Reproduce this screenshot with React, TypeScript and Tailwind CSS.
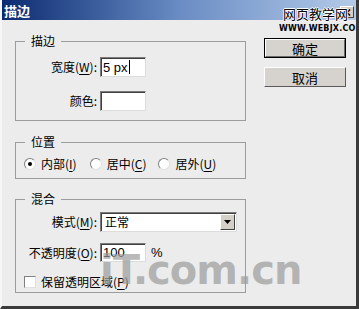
import React from 'react'

const cjk = { fontFamily: '"Noto Sans CJK SC", "Liberation Sans", sans-serif' }

function U({ children }: { children: React.ReactNode }) {
  return <span className="underline underline-offset-2">{children}</span>
}

function Sunken({ className, children }: { className: string; children?: React.ReactNode }) {
  return (
    <div
      className={`bg-white border border-t-[#7a7a7a] border-l-[#7a7a7a] border-r-[#dcdcdc] border-b-[#dcdcdc] shadow-[inset_1px_1px_0_#404040] ${className}`}
    >
      {children}
    </div>
  )
}

function Radio({ checked }: { checked?: boolean }) {
  return (
    <div className="w-[12px] h-[12px] rounded-full bg-white border border-t-[#808080] border-l-[#808080] border-r-[#e0e0e0] border-b-[#e0e0e0] flex items-center justify-center">
      {checked && <div className="w-[4px] h-[4px] rounded-full bg-black" />}
    </div>
  )
}

function Group({ title, className, children }: { title: string; className: string; children: React.ReactNode }) {
  return (
    <fieldset className={`border border-[#9c9c9c] ${className}`}>
      <legend className="ml-[9px] px-[6px] text-[12px] leading-[12px] text-black">{title}</legend>
      {children}
    </fieldset>
  )
}

export default function App() {
  return (
    <div
      className="w-[359px] h-[309px] bg-[#ececec] relative overflow-hidden border-l-2 border-l-[#f6f6f6] border-r-[3px] border-r-[#3a3a3a] border-b-[3px] border-b-[#3a3a3a] text-[12px] text-black"
      style={cjk}
    >
      {/* title bar */}
      <div className="h-[20px] bg-gradient-to-r from-[#0c2a70] via-[#6a8cc4] to-[#b4cbe8] flex items-center pl-[2px]">
        <span className="text-white font-bold text-[13px] leading-none">描边</span>
      </div>

      <div className="flex">
        <div className="ml-[13px] pt-[15px] w-[231px] flex flex-col">
          <Group title="描边" className="h-[86px]">
            <div className="pt-[10px] grid grid-cols-[81px_auto] gap-x-[3px] gap-y-[14px] items-center">
              <span className="text-right">宽度(<U>W</U>):</span>
              <Sunken className="w-[46px] h-[20px] flex items-center pl-[2px]">
                <span className="text-[13px] leading-none" style={{ fontFamily: '"Liberation Sans", sans-serif' }}>
                  5 px
                </span>
                <span className="w-px h-[14px] bg-black ml-[1px]" />
              </Sunken>
              <span className="text-right">颜色:</span>
              <Sunken className="w-[46px] h-[20px]" />
            </div>
          </Group>

          <Group title="位置" className="mt-[15px] h-[43px]">
            <div className="pt-[10px] pl-[8px] flex items-center">
              <Radio checked />
              <span className="ml-[5px] leading-[12px]">内部(<U>I</U>)</span>
              <div className="ml-[13px]">
                <Radio />
              </div>
              <span className="ml-[5px] leading-[12px]">居中(<U>C</U>)</span>
              <div className="ml-[12px]">
                <Radio />
              </div>
              <span className="ml-[5px] leading-[12px]">居外(<U>U</U>)</span>
            </div>
          </Group>

          <Group title="混合" className="mt-[14px] h-[100px]">
            <div className="pt-[7px] grid grid-cols-[81px_auto] gap-x-[3px] items-center">
              <span className="text-right">模式(<U>M</U>):</span>
              <Sunken className="w-[137px] h-[20px] flex items-center justify-between">
                <span className="pl-[4px] leading-none">正常</span>
                <div className="w-[15px] h-[16px] bg-[#d4d0c8] border border-t-white border-l-white border-r-[#404040] border-b-[#404040] flex items-center justify-center mr-[1px]">
                  <svg width="7" height="4" viewBox="0 0 7 4">
                    <path d="M0 0h7L3.5 4z" fill="#000" />
                  </svg>
                </div>
              </Sunken>
              <span className="text-right mt-[11px]">不透明度(<U>O</U>):</span>
              <div className="mt-[11px] flex items-center">
                <Sunken className="w-[46px] h-[19px] flex items-center pl-[2px]">
                  <span className="text-[13px] leading-none" style={{ fontFamily: '"Liberation Sans", sans-serif' }}>
                    100
                  </span>
                </Sunken>
                <span className="ml-[5px] text-[13px]" style={{ fontFamily: '"Liberation Sans", sans-serif' }}>
                  %
                </span>
              </div>
            </div>
            <div className="mt-[13px] pl-[8px] flex items-center">
              <div className="w-[12px] h-[12px] bg-white border border-t-[#808080] border-l-[#808080] border-r-[#e0e0e0] border-b-[#e0e0e0]" />
              <span className="ml-[5px] leading-[12px]">保留透明区域(<U>P</U>)</span>
            </div>
          </Group>
        </div>

        <div className="ml-[18px] pt-[18px] flex flex-col gap-[9px]">
          <button className="w-[82px] h-[20px] border border-black bg-[#d6d3ce] flex items-center justify-center">
            <span className="w-full h-full flex items-center justify-center border border-t-white border-l-white border-r-[#6a6a6a] border-b-[#6a6a6a] text-[13px] leading-none">
              确定
            </span>
          </button>
          <button className="w-[82px] h-[20px] bg-[#d6d3ce] border border-t-white border-l-white border-r-[#5a5a5a] border-b-[#5a5a5a] flex items-center justify-center text-[13px] leading-none">
            取消
          </button>
        </div>
      </div>

      {/* close button */}
      <div className="absolute left-[338px] top-[6px] w-[14px] h-[12px] bg-[#d4d0c8] border border-t-white border-l-white border-r-[#404040] border-b-[#404040] flex items-center justify-center">
        <svg width="8" height="7" viewBox="0 0 8 7">
          <path d="M1 0.5l6 6M7 0.5l-6 6" stroke="#000" strokeWidth="1.6" />
        </svg>
      </div>

      {/* watermarks */}
      <div className="absolute left-[281px] top-[7px] text-[13px] leading-[13px] text-black [text-shadow:1px_0_0_#fff,-1px_0_0_#fff,0_1px_0_#fff,0_-1px_0_#fff]">
        网页教学网
      </div>
      <div
        className="absolute left-[277px] top-[23px] text-[8px] leading-[11px] font-bold tracking-[0.2px] text-black whitespace-nowrap"
        style={{ fontFamily: '"DejaVu Sans", sans-serif' }}
      >
        WWW.WEBJX.COM
      </div>
      <div
        className="absolute left-[98px] top-[250px] text-[40px] leading-[40px] font-bold tracking-[-1px] text-[#9a9a9a]/70"
        style={{ fontFamily: '"DejaVu Sans", sans-serif' }}
      >
        iT.com.cn
      </div>
    </div>
  )
}
